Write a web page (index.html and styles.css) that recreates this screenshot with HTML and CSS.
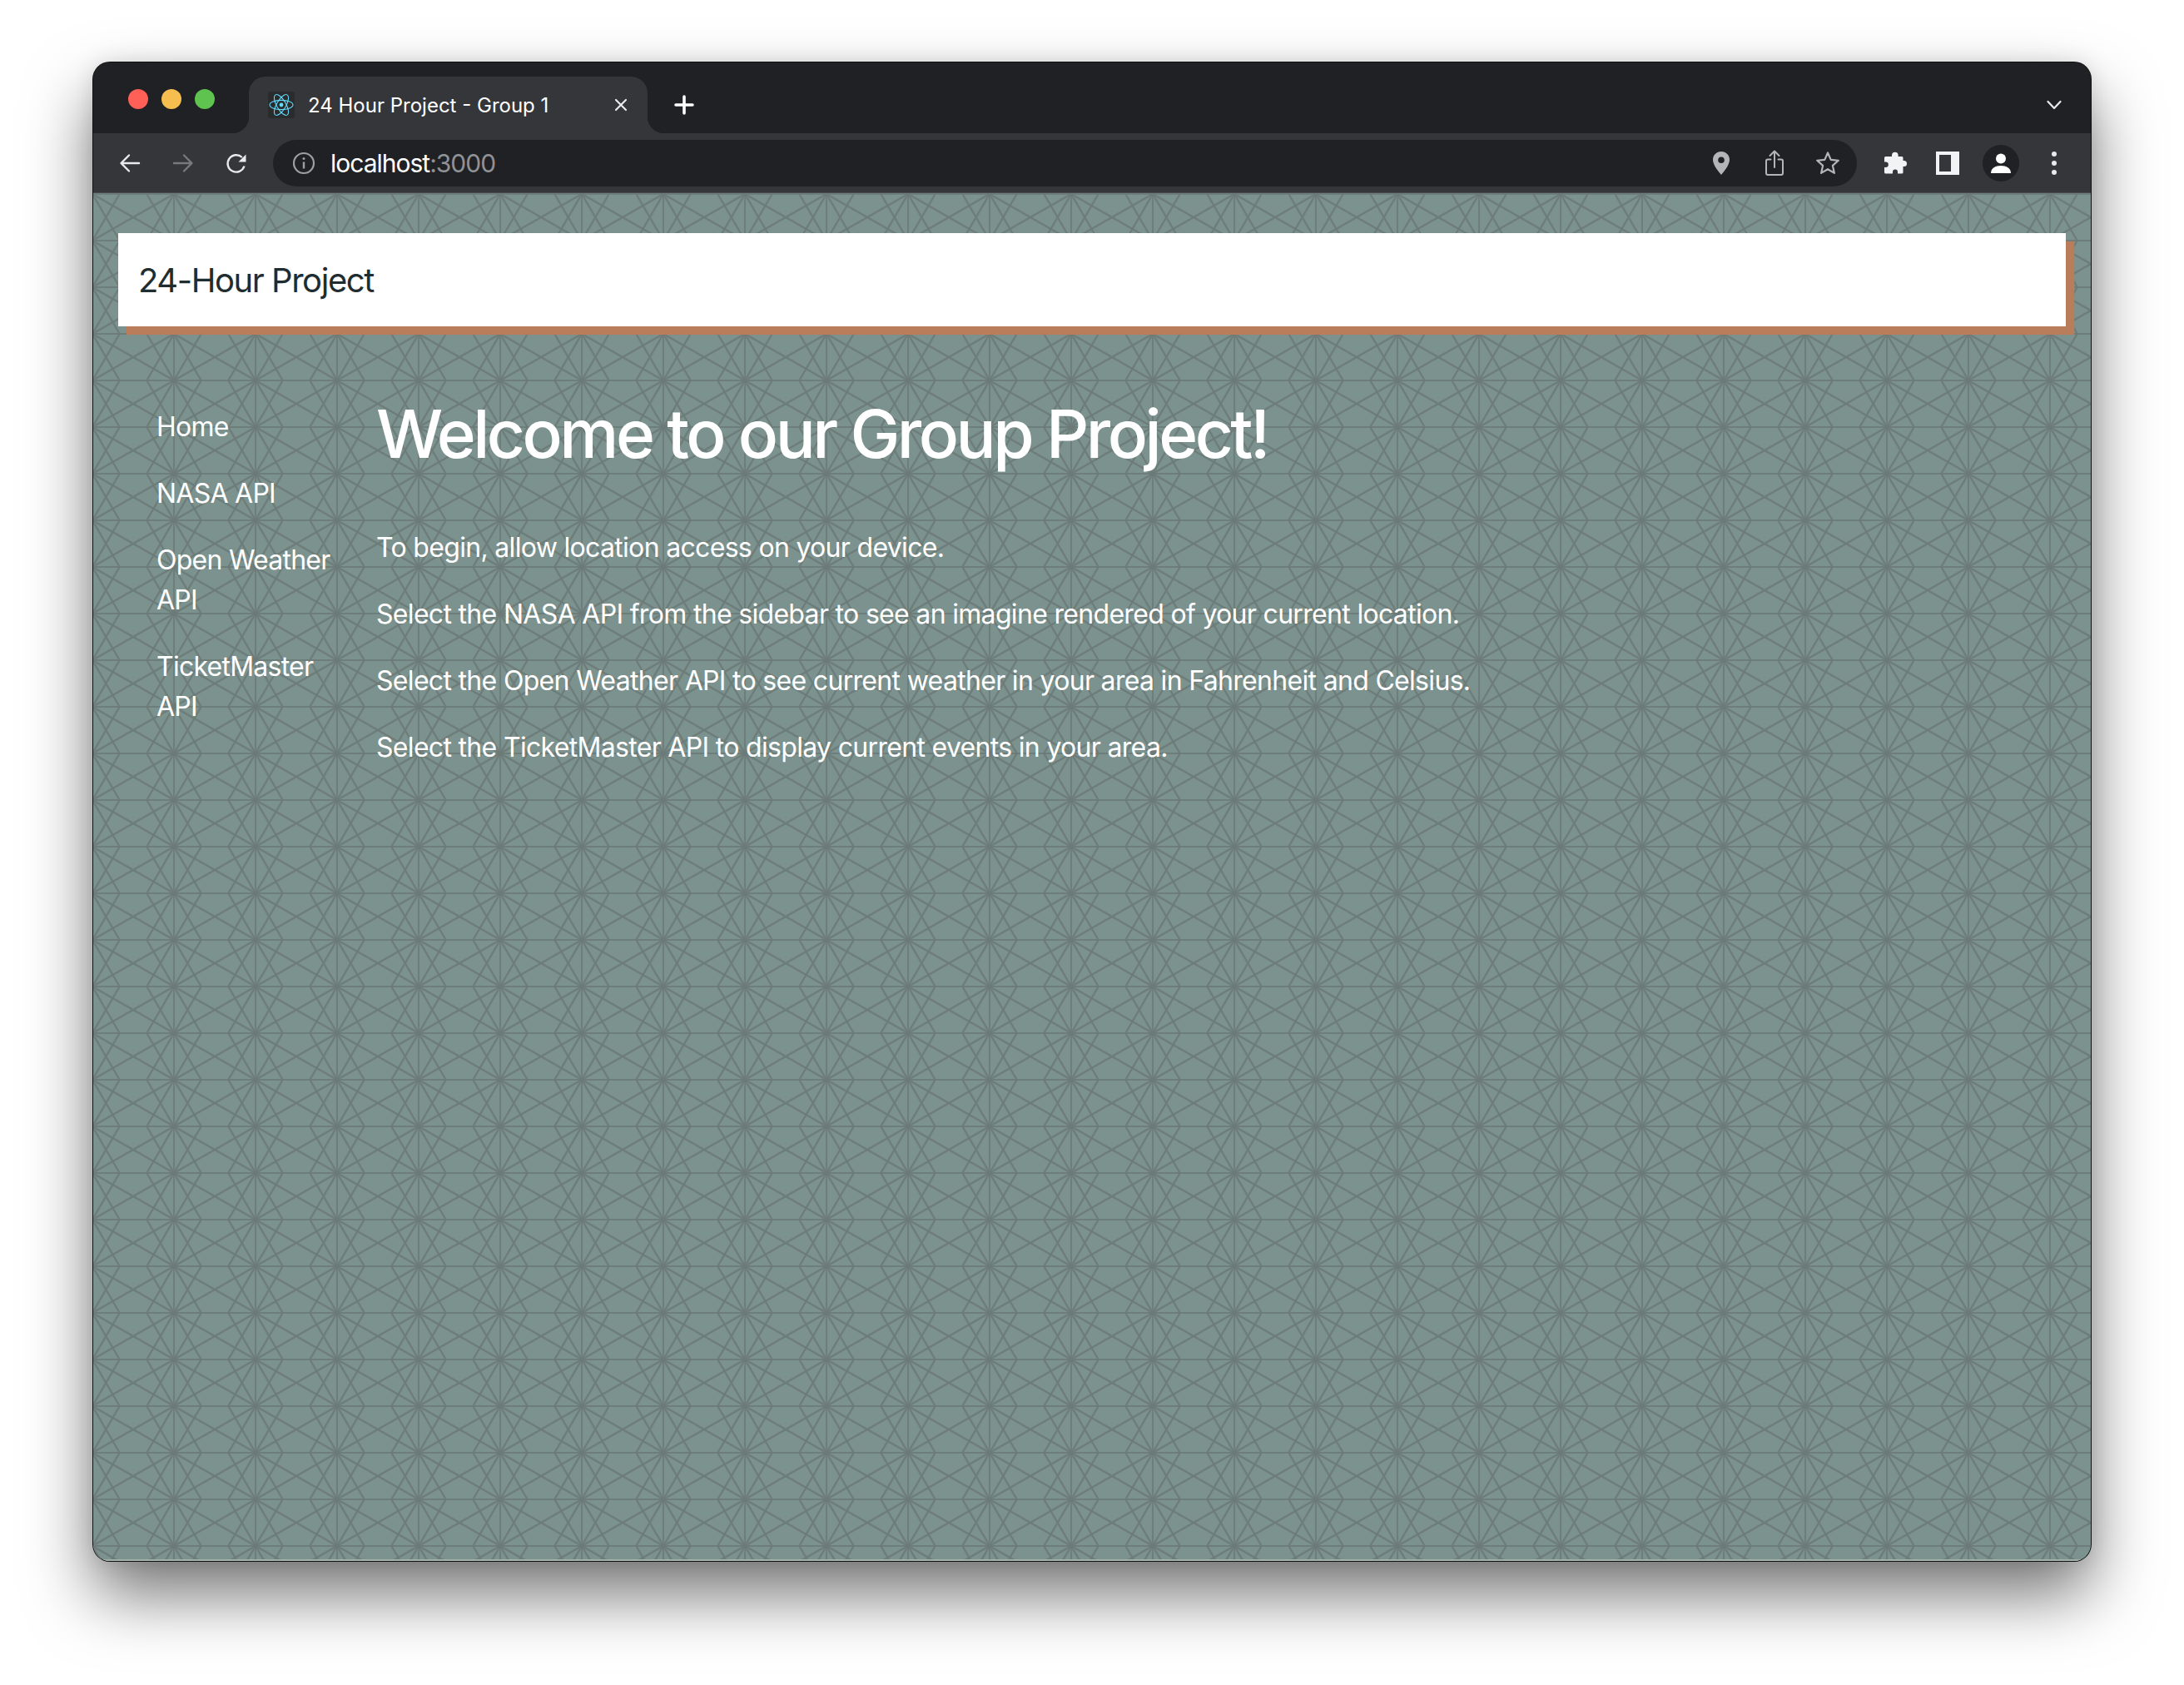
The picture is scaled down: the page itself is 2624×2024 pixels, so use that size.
FILE: index.html
```html
<!DOCTYPE html>
<html lang="en">
<head>
<meta charset="utf-8">
<title>24 Hour Project - Group 1</title>
<link rel="stylesheet" href="styles.css">
</head>
<body>
<div class="window">
  <div class="tabstrip">
    <div class="lights">
      <span class="light red"></span>
      <span class="light yellow"></span>
      <span class="light green"></span>
    </div>
    <div class="tab">
      <span class="favicon">
        <svg viewBox="0 0 32 32" width="32" height="32" fill="none" stroke="#61dafb" stroke-width="1.1">
          <ellipse cx="16" cy="16" rx="14" ry="5.6"/>
          <ellipse cx="16" cy="16" rx="14" ry="5.6" transform="rotate(60 16 16)"/>
          <ellipse cx="16" cy="16" rx="14" ry="5.6" transform="rotate(120 16 16)"/>
          <circle cx="16" cy="16" r="2.4" fill="#61dafb" stroke="none"/>
        </svg>
      </span>
      <span class="tab-title">24 Hour Project - Group 1</span>
      <svg class="tab-close" viewBox="0 0 16 16" width="16" height="16" stroke="#e8eaed" stroke-width="2.2" stroke-linecap="round">
        <path d="M2 2l12 12M14 2L2 14"/>
      </svg>
    </div>
    <svg class="newtab" viewBox="0 0 24 24" width="24" height="24" stroke="#fff" stroke-width="3.6" stroke-linecap="round">
      <path d="M12 2v20M2 12h20"/>
    </svg>
    <svg class="tabmenu" viewBox="0 0 18 12" width="18" height="12" fill="none" stroke="#e8eaed" stroke-width="2.2" stroke-linecap="round" stroke-linejoin="round">
      <path d="M1.5 2L9 10l7.500-8"/>
    </svg>
  </div>

  <div class="toolbar">
    <span class="tool">
      <svg viewBox="0 0 28 28" width="28" height="28" fill="none" stroke="#e8eaed" stroke-width="2.400" stroke-linecap="round" stroke-linejoin="round"><path d="M25 14H4M13 4.500L3.500 14l9.500 9.500"/></svg>
    </span>
    <span class="tool">
      <svg viewBox="0 0 28 28" width="28" height="28" fill="none" stroke="#77797d" stroke-width="2.400" stroke-linecap="round" stroke-linejoin="round"><path d="M3 14h21M15 4.500l9.500 9.500-9.500 9.500"/></svg>
    </span>
    <span class="tool">
      <svg viewBox="0 0 28 28" width="28" height="28" fill="none" stroke="#e8eaed" stroke-width="2.400"><path d="M23.500 17.500A10.200 10.200 0 1 1 20.800 7"/><path d="M17 12.500L26 3.500v9z" transform="translate(-0.500 0)" fill="#e8eaed" stroke="none"/></svg>
    </span>
    <div class="omnibox">
      <svg class="site-info" viewBox="0 0 28 28" width="28" height="28" fill="none" stroke="#9aa0a6" stroke-width="2.200"><circle cx="14" cy="14" r="12"/><path d="M14 12.500v8" stroke-width="2.400"/><circle cx="14" cy="8.500" r="1.500" fill="#9aa0a6" stroke="none"/></svg>
      <span class="url">localhost<span class="port">:3000</span></span>
      <span class="tool">
        <svg viewBox="0 0 22 30" width="22" height="30"><path fill-rule="evenodd" fill="#b3b5b8" d="M11 1C5.200 1 1 5.400 1 11c0 6.500 7.300 14.500 10 18 2.700-3.500 10-11.500 10-18C21 5.400 16.800 1 11 1zm0 6.500a3.800 3.800 0 1 1 0 7.600 3.800 3.800 0 0 1 0-7.600z"/></svg>
      </span>
      <span class="tool">
        <svg viewBox="0 0 24 32" width="24" height="32" fill="none" stroke="#b3b5b8" stroke-width="2" stroke-linecap="round" stroke-linejoin="round"><path d="M7.500 11.500H4a2 2 0 0 0-2 2V28a2 2 0 0 0 2 2h16a2 2 0 0 0 2-2V13.500a2 2 0 0 0-2-2h-3.500"/><path d="M12 21V2M6.500 7L12 1.500 17.500 7"/></svg>
      </span>
      <span class="tool">
        <svg viewBox="0 0 30 30" width="30" height="30" fill="none" stroke="#b3b5b8" stroke-width="2.200" stroke-linejoin="round"><path d="M15 2.500l3.700 8.400 9.100 .9-6.900 6.100 2 9-7.900-4.700-7.900 4.700 2-9-6.900-6.100 9.100-.9z"/></svg>
      </span>
    </div>
    <div class="toolgroup">
      <span class="tool">
        <svg viewBox="0 0 30 30" width="30" height="30"><path fill="#f1f3f4" d="M12 5.500a3.800 3.800 0 0 1 7.600 0V7H24a1.500 1.500 0 0 1 1.500 1.500V12h1a3.500 3.500 0 0 1 0 7h-1v7a1.500 1.500 0 0 1-1.500 1.500h-5v-2a3 3 0 0 0-6 0v2H4.500A1.500 1.500 0 0 1 3 26v-6h1.500a3.300 3.300 0 0 0 0-6.600H3V8.500A1.500 1.500 0 0 1 4.500 7H12z"/></svg>
      </span>
      <span class="tool">
        <span class="panel-icon"></span>
      </span>
      <span class="tool">
        <span class="avatar">
          <svg viewBox="0 0 26 26" width="26" height="26"><circle cx="13" cy="7.500" r="6" fill="#fff"/><path fill="#fff" d="M1 25c0-6 5.500-9 12-9s12 3 12 9z"/></svg>
        </span>
      </span>
      <span class="tool">
        <span class="dots"><i></i><i></i><i></i></span>
      </span>
    </div>
  </div>

  <div class="page">
    <nav class="brandbar"><span class="brand">24-Hour Project</span></nav>
    <div class="content">
      <ul class="sidebar">
        <li><a>Home</a></li>
        <li><a>NASA API</a></li>
        <li><a>Open Weather API</a></li>
        <li><a>TicketMaster API</a></li>
      </ul>
      <main class="welcome">
        <h1>Welcome to our Group Project!</h1>
        <p>To begin, allow location access on your device.</p>
        <p>Select the NASA API from the sidebar to see an imagine rendered of your current location.</p>
        <p>Select the Open Weather API to see current weather in your area in Fahrenheit and Celsius.</p>
        <p>Select the TicketMaster API to display current events in your area.</p>
      </main>
    </div>
  </div>
</div>
</body>
</html>
```

FILE: styles.css
```css
* {
  box-sizing: border-box;
}
body {
  margin: 0;
  height: 2024px;
  padding: 75px 112px 0;
  background: #fff;
  font-family: Inter, "Liberation Sans", sans-serif;
  overflow: hidden;
}
.window {
  width: 2400px;
  height: 1800px;
  display: flex;
  flex-direction: column;
  border-radius: 20px;
  overflow: hidden;
  background: #202124;
  box-shadow: 0 0 0 1px #111, 0 40px 80px rgba(0, 0, 0, 0.55), 0 0 24px rgba(0, 0, 0, 0.1);
}

/* tab strip */
.tabstrip {
  height: 85px;
  display: flex;
  align-items: flex-end;
  padding-left: 42px;
  padding-right: 35px;
  background: #202124;
}
.lights {
  display: flex;
  gap: 16px;
  width: 145px;
  align-self: flex-start;
  padding-top: 32px;
}
.light {
  width: 24px;
  height: 24px;
  border-radius: 50%;
}
.red { background: #fe5f57; }
.yellow { background: #f6bd4f; }
.green { background: #5ec44f; }
.tab {
  position: relative;
  width: 479px;
  height: 68px;
  display: flex;
  align-items: center;
  padding: 0 24px 0 23px;
  background: #35363a;
  border-radius: 20px 20px 0 0;
  color: #fff;
}
.tab::before,
.tab::after {
  content: "";
  position: absolute;
  bottom: 0;
  width: 20px;
  height: 20px;
}
.tab::before {
  left: -20px;
  background: radial-gradient(circle at 0 0, transparent 20px, #35363a 20.500px);
}
.tab::after {
  right: -20px;
  background: radial-gradient(circle at 100% 0, transparent 20px, #35363a 20.500px);
}
.favicon {
  width: 32px;
  height: 32px;
  background: #2a2b2d;
  border-radius: 3px;
  margin-top: -1px;
  flex: none;
}
.favicon svg {
  display: block;
}
.tab-title {
  flex: 1;
  margin-left: 16px;
  font-size: 24px;
  white-space: nowrap;
}
.tab-close {
  margin-top: -1px;
}
.newtab {
  margin: 0 0 22px 32px;
}
.tabmenu {
  margin: 0 0 28px auto;
}

/* toolbar */
.toolbar {
  height: 72px;
  display: flex;
  align-items: center;
  padding: 0 12px;
  background: #35363a;
  border-bottom: 1px solid #4a4b4f;
}
.tool {
  width: 64px;
  height: 56px;
  flex: none;
  display: flex;
  align-items: center;
  justify-content: center;
}
.omnibox {
  width: 1904px;
  height: 56px;
  margin-left: 12px;
  display: flex;
  align-items: center;
  padding: 0 3px 0 23px;
  background: #202124;
  border-radius: 28px;
}
.url {
  flex: 1;
  margin-left: 18px;
  font-size: 30px;
  letter-spacing: -1px;
  color: #fff;
}
.port {
  color: #8f9296;
}
.toolgroup {
  display: flex;
  margin-left: 13px;
}
.panel-icon {
  width: 28px;
  height: 28px;
  background: #f1f3f4;
  border: 4px solid #f1f3f4;
  border-right-width: 10px;
  box-shadow: inset 0 0 0 12px #35363a;
}
.avatar {
  width: 44px;
  height: 44px;
  border-radius: 50%;
  background: #202124;
  display: flex;
  align-items: center;
  justify-content: center;
}
.avatar svg {
  margin-top: 1px;
}
.dots {
  display: flex;
  flex-direction: column;
  gap: 5px;
}
.dots i {
  width: 6px;
  height: 6px;
  border-radius: 50%;
  background: #e8eaed;
}

/* page */
.page {
  flex: 1;
  padding: 48px 30px 0;
  background-color: #7b928e;
  background-image: url("data:image/svg+xml,%3Csvg xmlns='http://www.w3.org/2000/svg' width='98' height='56'%3E%3Cg fill='none'%3E%3Cpath stroke='%23748582' stroke-width='2.200' d='M49 0V56M0 28H98'/%3E%3Cpath stroke='%23748582' stroke-width='3' d='M0 0L98 56M98 0L0 56M32.670 0L49 28L65.330 0L81.670 28L65.330 56L49 28L32.670 56L16.330 28Z'/%3E%3Cpath stroke='%236b7a76' stroke-width='1.300' d='M49 0V56M0 28H98M0 0L98 56M98 0L0 56M32.670 0L49 28L65.330 0L81.670 28L65.330 56L49 28L32.670 56L16.330 28Z'/%3E%3C/g%3E%3C/svg%3E");
  background-position: 47.700px -27.300px;
  box-shadow: inset 0 -2px 0 #a3b0ac;
}
.brandbar {
  height: 112px;
  display: flex;
  align-items: center;
  padding-left: 24px;
  background: #fff;
  box-shadow: 10px 10px 1px #b97d5c;
}
.brand {
  font-size: 40px;
  letter-spacing: -1.450px;
  color: #1f2d30;
}
.content {
  display: flex;
  margin-top: 81px;
  color: #fff;
}
.sidebar {
  width: 310px;
  flex: none;
  margin: 0;
  padding: 0 46px;
  list-style: none;
  font-size: 32px;
  line-height: 48px;
  letter-spacing: -0.750px;
}
.sidebar li {
  padding: 16px 0;
}
.welcome {
  flex: 1;
}
.welcome h1 {
  margin: 0 0 65px;
  font-size: 80px;
  font-weight: 550;
  line-height: 96px;
  letter-spacing: -3.500px;
}
.welcome p {
  margin: 0 0 32px;
  font-size: 32px;
  line-height: 48px;
  letter-spacing: -0.680px;
}
```
